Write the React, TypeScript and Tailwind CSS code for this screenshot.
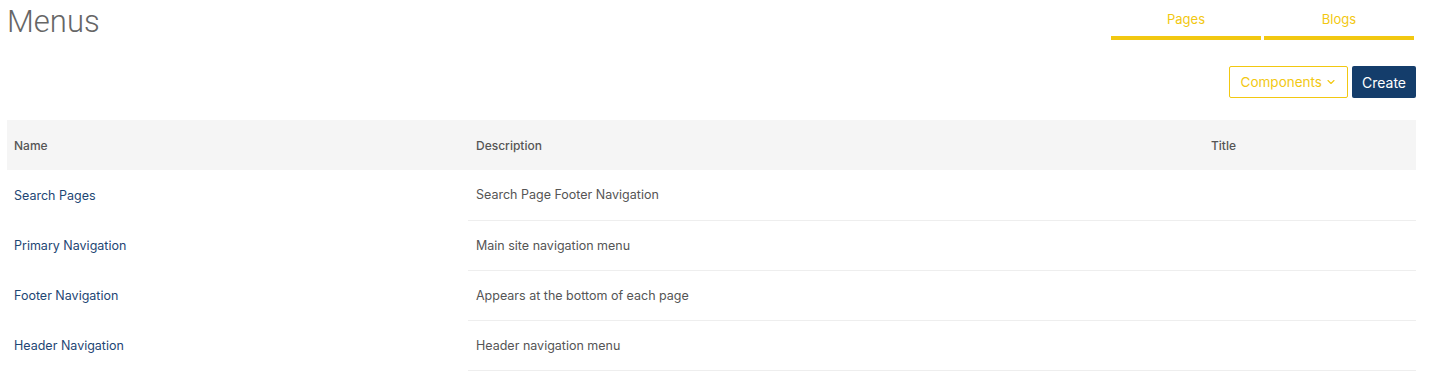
import { ChevronDown } from "lucide-react";

const rows = [
  { name: "Search Pages", description: "Search Page Footer Navigation", title: "" },
  { name: "Primary Navigation", description: "Main site navigation menu", title: "" },
  { name: "Footer Navigation", description: "Appears at the bottom of each page", title: "" },
  { name: "Header Navigation", description: "Header navigation menu", title: "" },
];

export default function App() {
  return (
    <div className="min-h-screen bg-white pl-[7px] pr-[13px] font-['Inter',sans-serif]">
      {/* Title & tabs */}
      <div className="flex items-start justify-between">
        <h1 className="pt-[3px] font-['Roboto',sans-serif] text-[31px] font-light leading-[37px] text-[#666]">Menus</h1>
        <nav className="mr-[2px] flex gap-[3px]">
          {["Pages", "Blogs"].map((tab) => (
            <a
              key={tab}
              href="#"
              className="block h-[40px] w-[150px] border-b-4 border-[#f2c811] pt-[10px] text-center text-[13px] leading-[18px] text-[#f2c811]"
            >
              {tab}
            </a>
          ))}
        </nav>
      </div>

      {/* Actions */}
      <div className="mt-[26px] flex justify-end gap-[4px]">
        <button className="flex h-[32px] items-center gap-[3px] rounded-[2px] border border-[#f2c811] pl-[11px] pr-[10px] text-[13.5px] text-[#f2c811]">
          Components
          <ChevronDown className="h-[12px] w-[12px]" strokeWidth={2.25} />
        </button>
        <button className="h-[32px] rounded-[2px] bg-[#143d6b] px-[10px] text-[14px] text-white">Create</button>
      </div>

      {/* Table */}
      <table className="mt-[22px] w-full table-fixed border-collapse text-left">
        <thead>
          <tr className="h-[50px] bg-[#f5f5f5] text-[12px] text-[#555]">
            <th className="w-[461px] px-[7px] pt-[2px] font-medium">Name</th>
            <th className="w-[736px] px-[8px] pt-[2px] font-medium">Description</th>
            <th className="px-[7px] pt-[2px] font-medium">Title</th>
          </tr>
        </thead>
        <tbody>
          {rows.map((row) => (
            <tr key={row.name} className="h-[50px] text-[12.5px]">
              <td className="px-[7px] pt-[2px] text-[#1e4674]">
                <a href="#">{row.name}</a>
              </td>
              <td className="border-b border-[#eeeeee] px-[8px] pt-[2px] text-[#555]">{row.description}</td>
              <td className="border-b border-[#eeeeee] px-[7px] pt-[2px] text-[#555]">{row.title}</td>
            </tr>
          ))}
        </tbody>
      </table>
    </div>
  );
}
